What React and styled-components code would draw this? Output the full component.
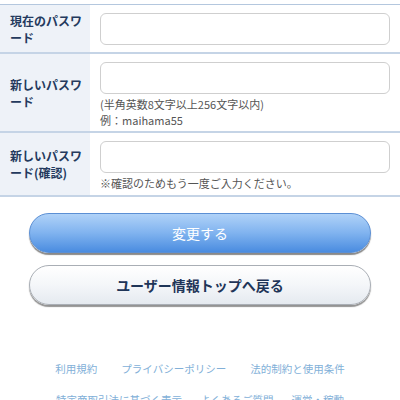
import React from "react";
import styled, { createGlobalStyle } from "styled-components";

const Global = createGlobalStyle`
  html, body { margin: 0; padding: 0; background: #fff; }
  body { font-family: "Noto Sans CJK JP", "Noto Sans", sans-serif; overflow: hidden; }
`;

const Page = styled.div`
  width: 400px;
  padding-top: 4px;
`;

const Table = styled.div`
  border-top: 1px solid #b4c7de;
`;

const Row = styled.div`
  display: flex;
  border-bottom: 2px solid #c5d4e6;
  height: ${(p) => p.$h}px;
`;

const Label = styled.div`
  width: 90px;
  box-sizing: border-box;
  padding: 0 4px 0 10px;
  background: #eef2f8;
  color: #243a5e;
  font-weight: 700;
  font-size: 12px;
  line-height: 17px;
  display: flex;
  align-items: center;
`;

const Field = styled.div`
  flex: 1;
  padding: 8px 10px 0 10px;
  display: flex;
  flex-direction: column;
`;

const Input = styled.div`
  height: 32px;
  flex: none;
  box-sizing: border-box;
  border: 1px solid #cfcfcf;
  border-radius: 6px;
  background: #fff;
`;

const Help = styled.div`
  margin-top: 2px;
  font-size: 11px;
  line-height: 16px;
  color: #555;
`;

const Buttons = styled.div`
  display: flex;
  flex-direction: column;
  gap: 12px;
  padding: 16px 29px 0;
`;

const Button = styled.div`
  height: 40px;
  box-sizing: border-box;
  border-radius: 20px;
  display: flex;
  align-items: center;
  justify-content: center;
  font-size: 14px;
  ${(p) =>
    p.$primary
      ? `
    background: linear-gradient(#b0d2f8, #80b3ef 50%, #4a8ce0);
    border: 1px solid #5b8fd4;
    color: #fff;
    box-shadow: 0 2px 1px rgba(40,40,40,0.55);
  `
      : `
    background: linear-gradient(#ffffff, #f4f6f9 50%, #e5eaf0);
    border: 1px solid #a9aeb5;
    color: #1f3558;
    font-weight: 700;
    box-shadow: 0 2px 1px rgba(40,40,40,0.5);
  `}
`;

const Footer = styled.div`
  margin-top: 56px;
  display: flex;
  flex-direction: column;
  gap: 15px;
`;

const LinkRow = styled.div`
  display: flex;
  justify-content: center;
  gap: ${(p) => p.$gap}px;
  font-size: 10.5px;
  line-height: 16px;
  color: #82b0d8;
  white-space: nowrap;
`;

export default function App() {
  return (
    <Page>
      <Global />
      <Table>
        <Row $h={47}>
          <Label>現在のパスワード</Label>
          <Field>
            <Input />
          </Field>
        </Row>
        <Row $h={77}>
          <Label>新しいパスワード</Label>
          <Field>
            <Input />
            <Help>
              (半角英数8文字以上256文字以内)
              <br />
              例：maihama55
            </Help>
          </Field>
        </Row>
        <Row $h={62}>
          <Label>新しいパスワード(確認)</Label>
          <Field>
            <Input />
            <Help>※確認のためもう一度ご入力ください。</Help>
          </Field>
        </Row>
      </Table>
      <Buttons>
        <Button $primary>変更する</Button>
        <Button>ユーザー情報トップへ戻る</Button>
      </Buttons>
      <Footer>
        <LinkRow $gap={24}>
          <span>利用規約</span>
          <span>プライバシーポリシー</span>
          <span>法的制約と使用条件</span>
        </LinkRow>
        <LinkRow $gap={18}>
          <span>特定商取引法に基づく表示</span>
          <span>よくあるご質問</span>
          <span>運営・稼動</span>
        </LinkRow>
      </Footer>
    </Page>
  );
}
